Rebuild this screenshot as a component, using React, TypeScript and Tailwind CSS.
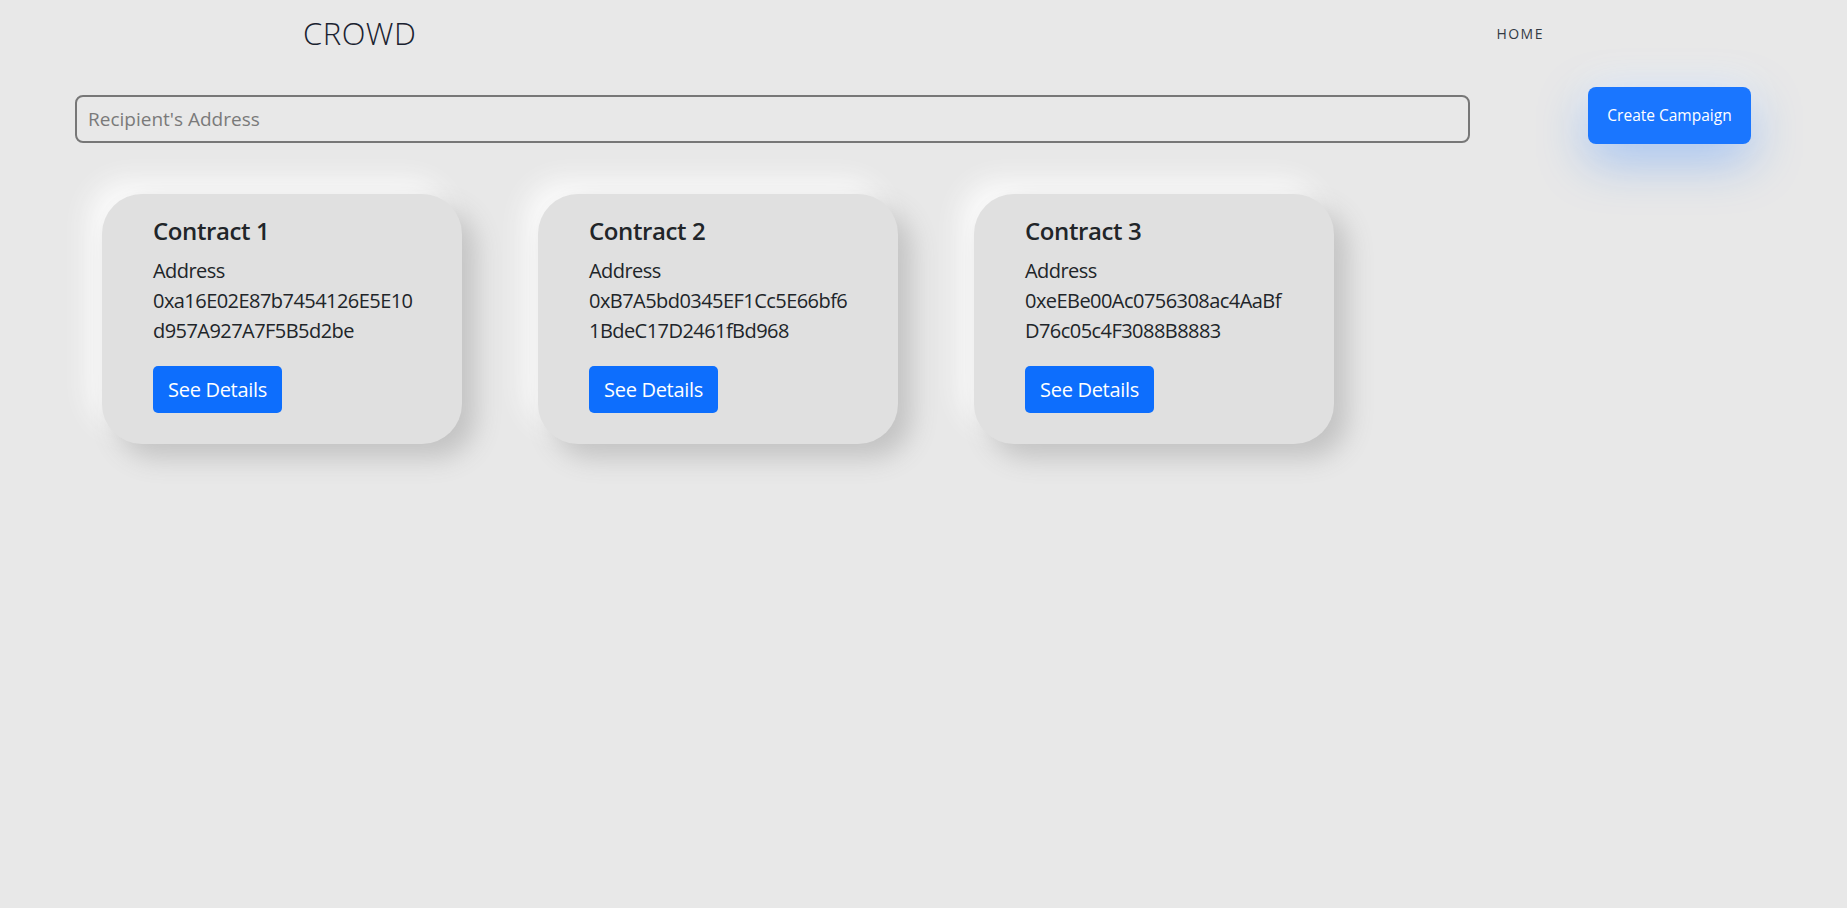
import React from "react";

interface ContractParams {
    name: string;
    address: [string, string];
}

const contracts: ContractParams[] = [
    { name: "Contract 1", address: ["0xa16E02E87b7454126E5E10", "d957A927A7F5B5d2be"] },
    { name: "Contract 2", address: ["0xB7A5bd0345EF1Cc5E66bf6", "1BdeC17D2461fBd968"] },
    { name: "Contract 3", address: ["0xeEBe00Ac0756308ac4AaBf", "D76c05c4F3088B8883"] },
];

const ContractCard = ({ name, address }: ContractParams) => {
    return (
        <div className="w-[360px] h-[250px] rounded-[40px] bg-[#e0e0e0] pl-[51px] pt-[22px] shadow-[14px_14px_26px_#c3c3c3,-14px_-14px_26px_#fafafa]">
            <h5 className="text-[24px] leading-[30px] font-semibold tracking-[-0.4px] text-[#212529]">{name}</h5>
            <div className="mt-[10px] text-[20px] leading-[30px] tracking-[-0.55px] text-[#212529]">
                <p>Address</p>
                <p>{address[0]}</p>
                <p>{address[1]}</p>
            </div>
            <button className="mt-[20px] w-[129px] h-[47px] rounded-[5px] bg-[#0d6efd] text-white text-[20px] tracking-[-0.3px]">
                See Details
            </button>
        </div>
    );
};

const App = () => {
    return (
        <div className="min-h-screen w-full bg-[#e8e8e8] font-['Open_Sans',sans-serif]">
            <nav className="h-[66px] flex items-center justify-between px-[303px]">
                <span className="text-[31px] font-light tracking-[0.5px] text-[#1a2230]">CROWD</span>
                <a className="text-[14px] tracking-[1.5px] text-[#333b44]">HOME</a>
            </nav>

            <div className="flex items-start pl-[75px] mt-[21px]">
                <input
                    type="text"
                    placeholder="Recipient's Address"
                    className="mt-[8px] w-[1395px] h-[48px] rounded-[8px] border-2 border-[#777777] bg-transparent px-[11px] text-[19px] placeholder:text-[#7a7a7a] outline-none"
                />
                <button className="ml-[118px] w-[163px] h-[57px] rounded-[8px] bg-[#1a76ff] text-white text-[15.5px] shadow-[0_16px_50px_rgba(26,118,255,0.35),0_-8px_40px_rgba(255,255,255,0.5)]">
                    Create Campaign
                </button>
            </div>

            <div className="flex gap-[76px] pl-[102px] mt-[50px]">
                {contracts.map((contract, idx) => (
                    <ContractCard key={idx} name={contract.name} address={contract.address} />
                ))}
            </div>
        </div>
    );
};

export default App;
